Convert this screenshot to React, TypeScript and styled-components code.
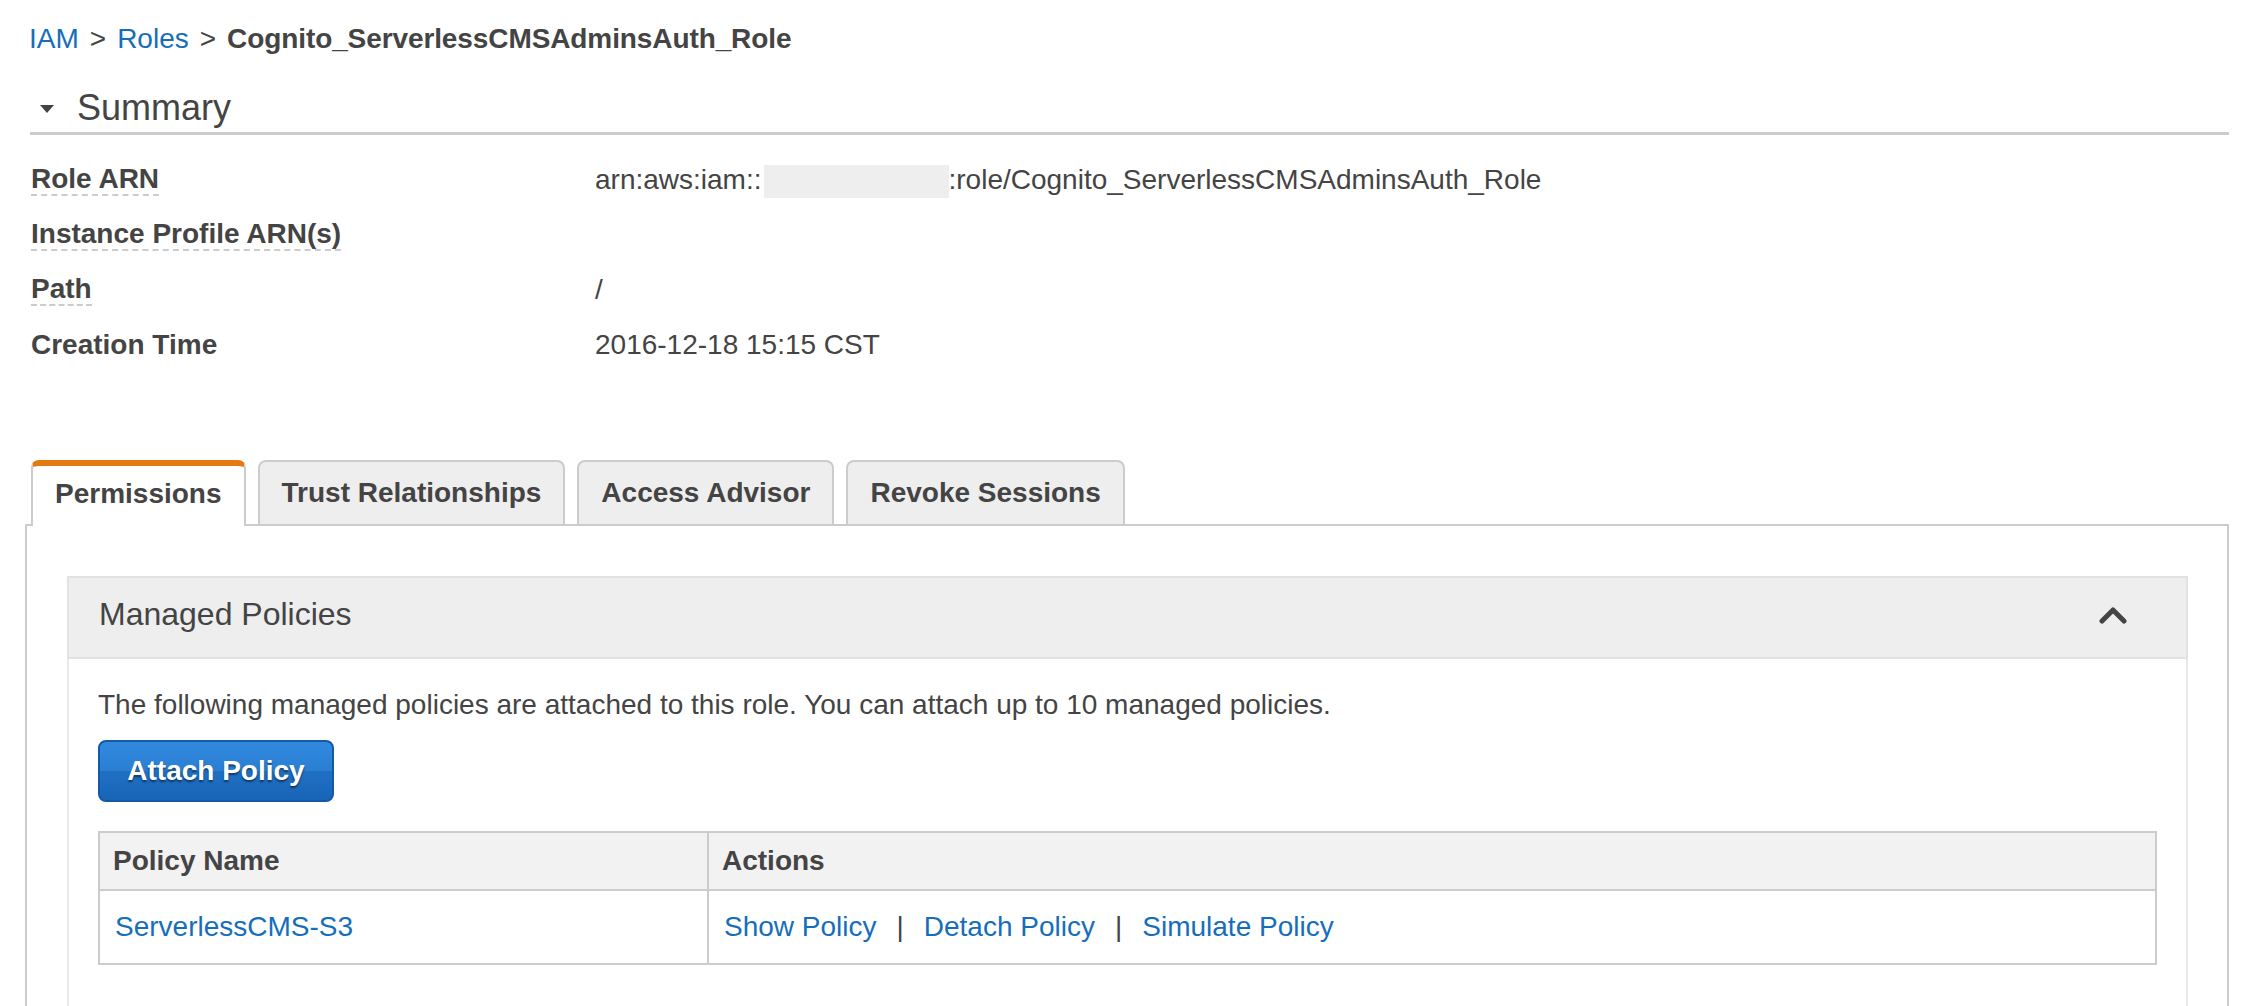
import styled, { createGlobalStyle, css } from "styled-components";

const GlobalStyle = createGlobalStyle`
  * {
    box-sizing: border-box;
  }
  html,
  body {
    margin: 0;
    padding: 0;
    background: #fff;
  }
  body {
    font-family: "Liberation Sans", Arial, Helvetica, sans-serif;
    font-size: 28px;
    color: #444;
  }
`;

const Page = styled.div`
  display: flex;
  flex-direction: column;
  height: 100vh;
  overflow: hidden;
  padding: 19px 29px 0 30px;
`;

const Breadcrumb = styled.nav`
  display: flex;
  align-items: center;
  margin-left: -1px;
  line-height: 40px;
`;

const Link = styled.a`
  color: #166ebb;
  text-decoration: none;
  cursor: pointer;
`;

const CrumbSep = styled.span`
  margin: 0 11px;
`;

const Current = styled.span`
  font-weight: bold;
  letter-spacing: -0.1px;
`;

const SummaryHeader = styled.h2`
  display: flex;
  align-items: center;
  gap: 23px;
  margin: 27px 0 0;
  padding: 0 0 2px 10px;
  font-size: 36px;
  font-weight: normal;
  line-height: 44px;
  border-bottom: 3px solid #ccc;
`;

const Caret = styled.span`
  width: 0;
  height: 0;
  margin-top: 2px;
  border-left: 7px solid transparent;
  border-right: 7px solid transparent;
  border-top: 8px solid #444;
`;

const Details = styled.dl`
  display: grid;
  grid-template-columns: 565px 1fr;
  grid-auto-rows: 55px;
  align-items: center;
  margin: 17px 0 0;
`;

const Term = styled.dt`
  margin-left: 1px;
  font-weight: bold;
  line-height: 32px;
`;

const TermText = styled.span`
  display: inline-block;
  line-height: 30px;
  border-bottom: 2px dashed #ccc;
`;

const Value = styled.dd`
  margin: 0;
  line-height: 40px;
`;

const Redacted = styled.span`
  display: inline-block;
  width: 185px;
  height: 33px;
  margin-left: 2px;
  background: #eee;
  vertical-align: middle;
`;

const TabArea = styled.div`
  display: flex;
  flex-direction: column;
  flex: 1;
  margin: 88px 0 0 -5px;
`;

const TabList = styled.div`
  display: flex;
  align-items: flex-end;
  gap: 12px;
  padding-left: 6px;
`;

const Tab = styled.button<{ $active?: boolean }>`
  height: 64px;
  margin: 0;
  padding: 0 22px;
  font: bold 28px "Liberation Sans", Arial, sans-serif;
  color: #444;
  background: #eee;
  border: 2px solid #ccc;
  border-bottom: none;
  border-radius: 8px 8px 0 0;
  cursor: pointer;
  ${(p) =>
    p.$active &&
    css`
      position: relative;
      z-index: 1;
      height: 66px;
      margin-bottom: -2px;
      padding-bottom: 4px;
      background: #fff;
      border-top: 6px solid #e47911;
    `}
`;

const Panel = styled.div`
  display: flex;
  flex-direction: column;
  flex: 1;
  padding: 50px 39px 0 40px;
  border: 2px solid #ccc;
  border-bottom: none;
`;

const Section = styled.section`
  display: flex;
  flex-direction: column;
  flex: 1;
`;

const SectionHeader = styled.div`
  display: flex;
  align-items: center;
  justify-content: space-between;
  height: 83px;
  padding: 0 58px 6px 30px;
  font-size: 32px;
  background: #eee;
  border: 2px solid #e2e2e2;
`;

const SectionBody = styled.div`
  flex: 1;
  padding: 26px 29px 0;
  border: 2px solid #e8e8e8;
  border-top: none;
  border-bottom: none;
`;

const Description = styled.p`
  margin: 0;
  line-height: 40px;
`;

const PrimaryButton = styled.button`
  display: block;
  width: 236px;
  height: 62px;
  margin-top: 15px;
  font: bold 28px "Liberation Sans", Arial, sans-serif;
  color: #fff;
  text-shadow: 0 2px 2px rgba(0, 0, 0, 0.5);
  background: linear-gradient(#3189dd, #2a7fd3 50%, #1f70c4 50%, #1965b8);
  border: 2px solid #1459a6;
  border-radius: 8px;
  cursor: pointer;
`;

const PolicyTable = styled.table`
  width: 100%;
  margin-top: 29px;
  border-collapse: collapse;
  border: 2px solid #ccc;
`;

const Th = styled.th<{ $width?: number }>`
  width: ${(p) => (p.$width ? `${p.$width}px` : "auto")};
  height: 58px;
  padding: 0 13px;
  text-align: left;
  font-weight: bold;
  background: #f2f2f2;
  border: 2px solid #ccc;
`;

const Td = styled.td`
  height: 74px;
  padding: 0 15px;
  border: 2px solid #ccc;
`;

const ActionSep = styled.span`
  margin: 0 20px;
`;

const ChevronUp = () => (
  <svg width="30" height="18" viewBox="0 0 30 18">
    <polyline
      points="4,15 15,4 26,15"
      fill="none"
      stroke="#444"
      strokeWidth="5"
      strokeLinecap="round"
      strokeLinejoin="round"
    />
  </svg>
);

const tabs = ["Permissions", "Trust Relationships", "Access Advisor", "Revoke Sessions"];

function App() {
  return (
    <>
      <GlobalStyle />
      <Page>
        <Breadcrumb>
          <Link>IAM</Link>
          <CrumbSep>&gt;</CrumbSep>
          <Link>Roles</Link>
          <CrumbSep>&gt;</CrumbSep>
          <Current>Cognito_ServerlessCMSAdminsAuth_Role</Current>
        </Breadcrumb>

        <SummaryHeader>
          <Caret />
          Summary
        </SummaryHeader>

        <Details>
          <Term>
            <TermText>Role ARN</TermText>
          </Term>
          <Value>
            arn:aws:iam::<Redacted />:role/Cognito_ServerlessCMSAdminsAuth_Role
          </Value>
          <Term>
            <TermText>Instance Profile ARN(s)</TermText>
          </Term>
          <Value />
          <Term>
            <TermText>Path</TermText>
          </Term>
          <Value>/</Value>
          <Term>Creation Time</Term>
          <Value>2016-12-18 15:15 CST</Value>
        </Details>

        <TabArea>
          <TabList>
            {tabs.map((t, i) => (
              <Tab key={t} $active={i === 0}>
                {t}
              </Tab>
            ))}
          </TabList>
          <Panel>
            <Section>
              <SectionHeader>
                Managed Policies
                <ChevronUp />
              </SectionHeader>
              <SectionBody>
                <Description>
                  The following managed policies are attached to this role. You can attach up to 10
                  managed policies.
                </Description>
                <PrimaryButton>Attach Policy</PrimaryButton>
                <PolicyTable>
                  <thead>
                    <tr>
                      <Th $width={609}>Policy Name</Th>
                      <Th>Actions</Th>
                    </tr>
                  </thead>
                  <tbody>
                    <tr>
                      <Td>
                        <Link>ServerlessCMS-S3</Link>
                      </Td>
                      <Td>
                        <Link>Show Policy</Link>
                        <ActionSep>|</ActionSep>
                        <Link>Detach Policy</Link>
                        <ActionSep>|</ActionSep>
                        <Link>Simulate Policy</Link>
                      </Td>
                    </tr>
                  </tbody>
                </PolicyTable>
              </SectionBody>
            </Section>
          </Panel>
        </TabArea>
      </Page>
    </>
  );
}

export default App;
